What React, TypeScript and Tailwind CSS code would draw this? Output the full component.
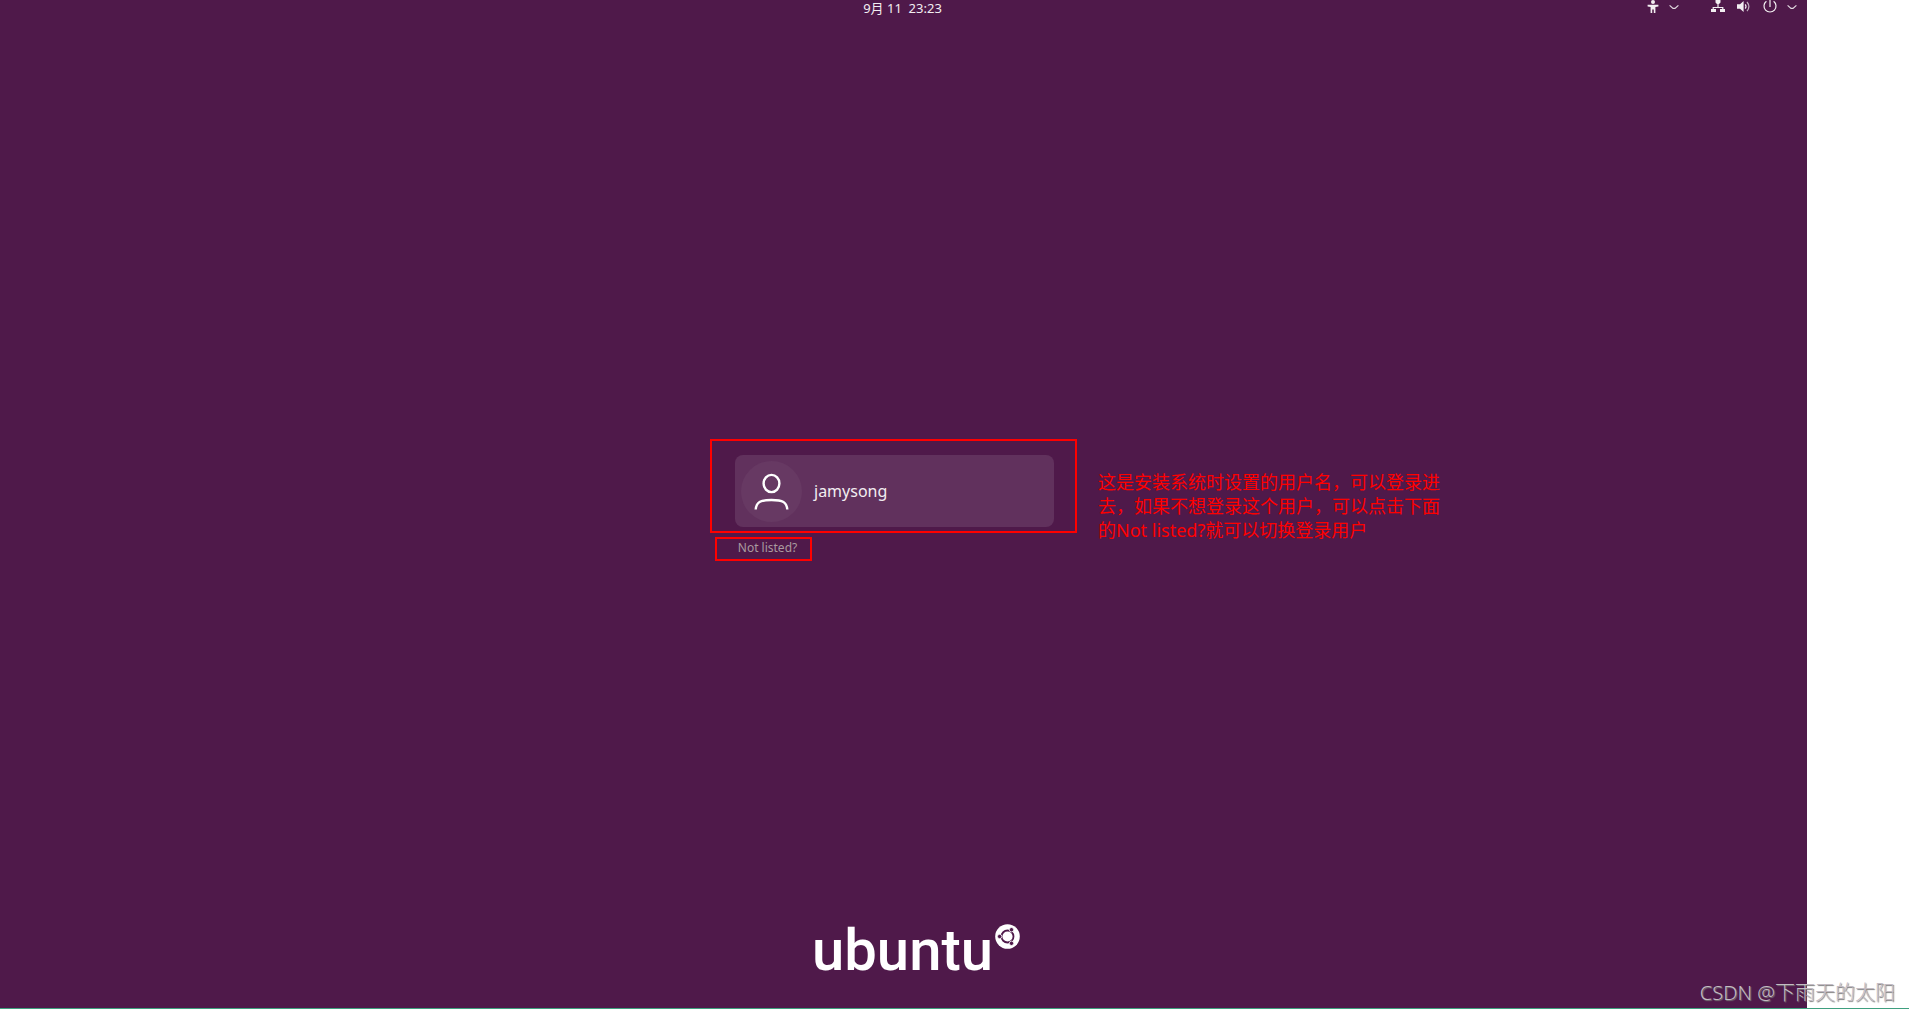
import { ReactNode } from "react";

interface StatusButtonProps {
    label: string;
    className?: string;
    children: ReactNode;
}

function StatusButton({ label, className = "", children }: StatusButtonProps) {
    return (
        <button aria-label={label} className={`flex h-4 items-start gap-2.5 ${className}`}>
            <span className="flex gap-3">{children}</span>
            <ChevronIcon />
        </button>
    );
}

function ChevronIcon() {
    return (
        <svg width="10" height="14" viewBox="0 0 10 14" fill="none" stroke="currentColor" strokeWidth="1.2">
            <path d="M.6 5.4 4 8.4h2l3.4-3" opacity=".9" />
        </svg>
    );
}

function AccessibilityIcon() {
    return (
        <svg width="12" height="14" viewBox="0 0 12 14" fill="currentColor">
            <circle cx="6" cy="2" r="2" />
            <path d="M.6 4.8h10.8v1.6L8.4 7v6H6.8V9.6H5.2V13H3.6V7l-3-.6z" />
        </svg>
    );
}

function NetworkIcon() {
    return (
        <svg width="14" height="14" viewBox="0 0 14 14" fill="currentColor">
            <path d="M4.5 0h5v2.6L8 4h-.4v3h4.8v2H14v3H9V9h2.2V8H2.800v1H5v3H0V9h1.600V7h4.800V4H6L4.500 2.600z" />
        </svg>
    );
}

function VolumeIcon() {
    return (
        <svg width="14" height="14" viewBox="0 0 14 14" fill="none" stroke="currentColor" strokeWidth="1.2">
            <path d="M0 4.2h3L6.6 1v11L3 8.800H0z" fill="currentColor" stroke="none" />
            <path d="M8.2 4.4q1.6 2.1 0 4.2" />
            <path d="M10 2q3.8 4.6 0 9.2" opacity=".7" />
        </svg>
    );
}

function PowerIcon() {
    return (
        <svg width="14" height="14" viewBox="0 0 14 14" fill="none" stroke="currentColor" strokeWidth="1.2">
            <path d="M7 0v7M3.4 1.2a6 6 0 1 0 7.2 0" />
        </svg>
    );
}

function UserIcon() {
    return (
        <svg width="35" height="37" viewBox="0 0 35 37" fill="none" stroke="currentColor" strokeWidth="2.4">
            <ellipse cx="17.5" cy="10.5" rx="7.9" ry="8.6" />
            <path d="M1.7 36.5C2.4 29 6 27 17.5 27s15.1 2 15.8 9.5" />
        </svg>
    );
}

function CircleOfFriends() {
    return (
        <svg width="25" height="25" viewBox="0 0 25 25" fill="none">
            <circle cx="12.5" cy="12.5" r="12.3" fill="#fff" />
            <circle cx="12.5" cy="12.5" r="6" stroke="#4f194a" strokeWidth="1.8" />
            <g fill="#4f194a" stroke="#fff" strokeWidth=".8">
                <circle cx="4.6" cy="12.5" r="2.2" />
                <circle cx="16.5" cy="5.7" r="2.2" />
                <circle cx="16.5" cy="19.3" r="2.2" />
            </g>
        </svg>
    );
}

export default function App() {
    return (
        <div className="flex min-h-screen flex-col bg-white pb-[3px] font-['Noto_Sans','Noto_Sans_CJK_SC',sans-serif]">
            <div className="relative flex flex-1 flex-col border-b border-[#3f9f7f]">
                <main className="mr-[102px] flex flex-1 flex-col bg-[#4f194a] text-[#f2eef1]">
                    <header className="grid grid-cols-[1fr_auto_1fr] items-start pr-2.5">
                        <time className="col-start-2 pl-2 text-[13px] leading-4 whitespace-pre">9月 11  23:23</time>
                        <div className="flex justify-end">
                            <StatusButton label="Accessibility" className="mr-8">
                                <AccessibilityIcon />
                            </StatusButton>
                            <StatusButton label="System menu">
                                <NetworkIcon />
                                <VolumeIcon />
                                <PowerIcon />
                            </StatusButton>
                        </div>
                    </header>

                    <section className="mt-[423px] grid grid-cols-[710fr_367px_730fr]">
                        <div className="col-start-2">
                            <div className="border-2 border-[#fe0000] pt-3.5 pr-[21px] pb-1 pl-[23px]">
                                <button className="flex h-[72px] w-full items-center gap-3 rounded-lg bg-[#61315d] pl-1.5">
                                    <span className="flex size-[61px] items-center justify-center rounded-full bg-[#673963] text-white">
                                        <UserIcon />
                                    </span>
                                    <span className="text-base">jamysong</span>
                                </button>
                            </div>
                            <div className="mt-1 ml-[5px] flex h-6 w-[97px] justify-center border-2 border-[#fe0000] pl-2">
                                <button className="h-[18px] text-xs text-[#a99a9f]">Not listed?</button>
                            </div>
                        </div>
                        <p className="mt-[31px] ml-[21px] w-[348px] text-lg leading-6 text-[#fe0000]">
                            这是安装系统时设置的用户名，可以登录进去，如果不想登录这个用户，可以点击下面的Not listed?就可以切换登录用户
                        </p>
                    </section>

                    <footer className="mt-auto mb-8 ml-[25px] flex items-start justify-center gap-0.5 text-white">
                        <span className="font-[Roboto,sans-serif] text-[58px] leading-[52px] font-medium">ubuntu</span>
                        <CircleOfFriends />
                    </footer>
                </main>
                <span className="absolute right-3.5 bottom-px text-xl leading-7 font-light text-[#c4bcc3] [text-shadow:1px_1px_1px_#777]">
                    CSDN @下雨天的太阳
                </span>
            </div>
        </div>
    );
}
